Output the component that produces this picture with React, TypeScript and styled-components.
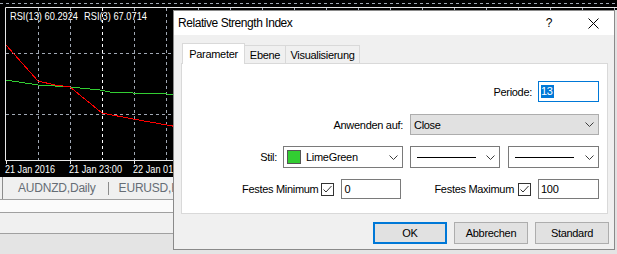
import React from "react";
import styled, { createGlobalStyle, css } from "styled-components";

const GlobalStyle = createGlobalStyle`
  html, body {
    margin: 0;
    padding: 0;
    background: #f0f0f0;
  }
  body {
    font-family: "Liberation Sans", Arial, sans-serif;
  }
  #root {
    width: 617px;
    height: 254px;
    overflow: hidden;
  }
`;

const Screen = styled.div`
  position: relative;
  width: 617px;
  height: 254px;
  overflow: hidden;
  display: flex;
  flex-direction: column;
`;

/* ---------- terminal behind the dialog ---------- */

const ChartTabs = styled.div`
  box-sizing: border-box;
  height: 23px;
  display: flex;
  align-items: center;
  background: #f0f0f0;
  border-bottom: 1px solid #a0a0a0;
  padding-left: 2px;
`;

const TabsEdge = styled.div`
  width: 1px;
  align-self: stretch;
  background: #8c8c8c;
  margin-right: 15px;
`;

const ChartTab = styled.span`
  font-size: 12px;
  letter-spacing: -0.2px;
  color: #666d75;
  white-space: nowrap;
`;

const TabDivider = styled.div`
  width: 1px;
  height: 13px;
  background: #8c8c8c;
  margin: 0 10px 0 12px;
`;

const Band = styled.div<{ $tone: "white" | "light" | "dark"; $h: number }>`
  box-sizing: border-box;
  height: ${(p) => p.$h}px;
  flex-shrink: 0;
  background: ${(p) =>
    p.$tone === "white" ? "#fbfbfb" : p.$tone === "light" ? "#f0f0f0" : "#e4e4e4"};
  ${(p) =>
    p.$tone !== "dark" &&
    css`
      border-bottom: 1px solid #a0a0a0;
    `}
`;

const red = [
  [6, 45], [38, 81], [55, 85], [70, 87], [102, 113], [133, 119], [167, 125], [200, 131],
];
const green = [
  [6, 80], [38, 85], [55, 86], [70, 87], [100, 90], [110, 92], [133, 93], [200, 95],
];

const pts = (a: number[][]) => a.map(([x, y]) => `${x},${y}`).join(" ");

function ChartCanvas() {
  const gridX: number[] = [];
  for (let x = 38; x < 617; x += 32) gridX.push(x);
  return (
    <svg width="617" height="181" style={{ display: "block", background: "#000" }}>
      <line x1="0" y1="3.5" x2="617" y2="3.5" stroke="#a0a8b4" strokeDasharray="3 3" />
      {gridX.map((x) => (
        <line
          key={x}
          x1={x + 0.5}
          y1="8"
          x2={x + 0.5}
          y2="160"
          stroke={x === 102 ? "#ffffff" : "#a0a8b4"}
          strokeDasharray="3 3"
        />
      ))}
      {[53, 114].map((y) => (
        <line key={y} x1="6" y1={y + 0.5} x2="617" y2={y + 0.5} stroke="#a0a8b4" strokeDasharray="3 3" />
      ))}
      <polyline points="617,7.5 5.5,7.5 5.5,160.5 617,160.5" fill="none" stroke="#e8e8e8" />
      {[6, 70, 134, 198].map((x) => (
        <line key={x} x1={x + 0.5} y1="160" x2={x + 0.5} y2="164" stroke="#e8e8e8" />
      ))}
      <polyline points={pts(green)} fill="none" stroke="#32cd32" shapeRendering="crispEdges" />
      <polyline points={pts(red)} fill="none" stroke="#ff0000" shapeRendering="crispEdges" />
      <g fill="#ffffff" fontFamily="Liberation Sans, Arial, sans-serif">
        <text x="10" y="20" fontSize="11" textLength="68" lengthAdjust="spacingAndGlyphs">
          RSI(13) 60.2924
        </text>
        <text x="84" y="20" fontSize="11" textLength="63" lengthAdjust="spacingAndGlyphs">
          RSI(3) 67.0714
        </text>
        <text x="5" y="173" fontSize="10" textLength="50" lengthAdjust="spacingAndGlyphs">
          21 Jan 2016
        </text>
        <text x="69" y="173" fontSize="10" textLength="53" lengthAdjust="spacingAndGlyphs">
          21 Jan 23:00
        </text>
        <text x="133" y="173" fontSize="10" textLength="53" lengthAdjust="spacingAndGlyphs">
          22 Jan 01:00
        </text>
      </g>
    </svg>
  );
}

/* ---------- dialog ---------- */

const Dialog = styled.div`
  position: absolute;
  left: 173px;
  top: 10px;
  box-sizing: border-box;
  width: 442px;
  height: 240px;
  border: 1px solid #8a8a8a;
  background: #f0f0f0;
  box-shadow: 2px 0 0 #e2e2e2;
  display: flex;
  flex-direction: column;
  font-size: 11px;
  letter-spacing: -0.3px;
  color: #000;
`;

const TitleBar = styled.div`
  height: 24px;
  flex-shrink: 0;
  display: flex;
  align-items: center;
  background: #fff;
  padding-left: 4px;
  font-size: 12px;
`;

const Title = styled.div`
  flex: 1;
  letter-spacing: -0.45px;
  white-space: nowrap;
`;

const TitleButton = styled.div<{ $w: number }>`
  width: ${(p) => p.$w}px;
  height: 24px;
  display: flex;
  align-items: center;
  justify-content: center;
  font-size: 12px;
`;

const DialogBody = styled.div`
  flex: 1;
  display: flex;
  flex-direction: column;
  padding: 8px 6px 5px 7px;
`;

const TabStrip = styled.div`
  position: relative;
  z-index: 1;
  display: flex;
  align-items: flex-end;
  height: 21px;
  margin: 0 0 -1px 1px;
`;

const Tab = styled.div<{ $active?: boolean; $w: number; $first?: boolean }>`
  box-sizing: border-box;
  width: ${(p) => p.$w}px;
  height: ${(p) => (p.$active ? 21 : 18)}px;
  margin-bottom: ${(p) => (p.$active ? 0 : 1)}px;
  border: 1px solid #d9d9d9;
  border-bottom: none;
  ${(p) => !p.$first && "border-left: none;"}
  background: ${(p) => (p.$active ? "#fff" : "#f0f0f0")};
  display: flex;
  align-items: center;
  justify-content: center;
  white-space: nowrap;
`;

const Panel = styled.div`
  box-sizing: border-box;
  height: 151px;
  flex-shrink: 0;
  background: #fff;
  border: 1px solid #d9d9d9;
  padding: 17px 8px 0 0;
  display: flex;
  flex-direction: column;
`;

const FormRow = styled.div<{ $mt?: number }>`
  display: flex;
  justify-content: flex-end;
  align-items: center;
  margin-top: ${(p) => p.$mt ?? 0}px;
`;

const Label = styled.span<{ $gap: number; $mr?: number }>`
  margin-right: ${(p) => p.$gap}px;
  margin-left: ${(p) => p.$mr ?? 0}px;
  white-space: nowrap;
`;

const TextBox = styled.div<{ $w: number; $h: number; $focus?: boolean; $mr?: number }>`
  box-sizing: border-box;
  width: ${(p) => p.$w}px;
  height: ${(p) => p.$h}px;
  margin-right: ${(p) => p.$mr ?? 0}px;
  border: 1px solid ${(p) => (p.$focus ? "#0078d7" : "#7a7a7a")};
  background: #fff;
  padding-left: 2px;
  display: flex;
  align-items: center;
`;

const Selected = styled.span`
  background: #0078d7;
  color: #fff;
  line-height: 13px;
  padding-right: 1px;
`;

const Combo = styled.div<{ $w: number; $h: number; $flat?: boolean; $mr?: number }>`
  box-sizing: border-box;
  width: ${(p) => p.$w}px;
  height: ${(p) => p.$h}px;
  margin-right: ${(p) => p.$mr ?? 0}px;
  border: 1px solid ${(p) => (p.$flat ? "#adadad" : "#7a7a7a")};
  background: ${(p) => (p.$flat ? "#e1e1e1" : "#fff")};
  display: flex;
  align-items: center;
  padding: 0 4px 0 3px;
`;

const ComboValue = styled.div`
  flex: 1;
  display: flex;
  align-items: center;
  white-space: nowrap;
`;

const Swatch = styled.div<{ $color: string }>`
  box-sizing: border-box;
  width: 14px;
  height: 14px;
  border: 1px solid #555;
  background: ${(p) => p.$color};
  margin-right: 5px;
`;

const LineSample = styled.div`
  width: 59px;
  height: 1px;
  background: #000;
  margin-left: 3px;
`;

const CheckBox = styled.div<{ $mr: number }>`
  box-sizing: border-box;
  width: 13px;
  height: 13px;
  border: 1px solid #333;
  background: #fff;
  margin-right: ${(p) => p.$mr}px;
  display: flex;
`;

const ButtonRow = styled.div`
  display: flex;
  justify-content: flex-end;
  margin: 8px -1px 0 0;
`;

const Button = styled.div<{ $primary?: boolean }>`
  box-sizing: border-box;
  width: 74px;
  height: 22px;
  margin-left: 7px;
  background: #e1e1e1;
  border: ${(p) => (p.$primary ? "2px solid #0078d7" : "1px solid #adadad")};
  display: flex;
  align-items: center;
  justify-content: center;
`;

const Chevron = () => (
  <svg width="9" height="5" viewBox="0 0 9 5">
    <polyline points="0.5,0.5 4.5,4.5 8.5,0.5" fill="none" stroke="#3c3c3c" />
  </svg>
);

const Check = () => (
  <svg width="11" height="11" viewBox="0 0 11 11">
    <polyline points="1.5,5.5 4,8 9.5,2" fill="none" stroke="#333" />
  </svg>
);

export default function App() {
  return (
    <>
      <GlobalStyle />
      <Screen>
        <ChartCanvas />
        <ChartTabs>
          <TabsEdge />
          <ChartTab>AUDNZD,Daily</ChartTab>
          <TabDivider />
          <ChartTab>EURUSD,H1</ChartTab>
        </ChartTabs>
        <Band $tone="white" $h={13} />
        <Band $tone="light" $h={21} />
        <Band $tone="dark" $h={20} />

        <Dialog>
          <TitleBar>
            <Title>Relative Strength Index</Title>
            <TitleButton $w={46}>?</TitleButton>
            <TitleButton $w={42}>
              <svg width="11" height="11" viewBox="0 0 11 11">
                <path d="M0.5 0.5 L10.5 10.5 M10.5 0.5 L0.5 10.5" stroke="#000" strokeWidth="1" />
              </svg>
            </TitleButton>
          </TitleBar>
          <DialogBody>
            <TabStrip>
              <Tab $active $first $w={63}>Parameter</Tab>
              <Tab $w={41}>Ebene</Tab>
              <Tab $w={74}>Visualisierung</Tab>
            </TabStrip>
            <Panel>
              <FormRow>
                <Label $gap={6}>Periode:</Label>
                <TextBox $w={61} $h={21} $focus>
                  <Selected>13</Selected>
                </TextBox>
              </FormRow>
              <FormRow $mt={12}>
                <Label $gap={7}>Anwenden auf:</Label>
                <Combo $w={189} $h={21} $flat>
                  <ComboValue>Close</ComboValue>
                  <Chevron />
                </Combo>
              </FormRow>
              <FormRow $mt={11}>
                <Label $gap={6}>Stil:</Label>
                <Combo $w={120} $h={22} $mr={7}>
                  <ComboValue>
                    <Swatch $color="#32cd32" />
                    LimeGreen
                  </ComboValue>
                  <Chevron />
                </Combo>
                <Combo $w={90} $h={22} $mr={8}>
                  <ComboValue>
                    <LineSample />
                  </ComboValue>
                  <Chevron />
                </Combo>
                <Combo $w={91} $h={22}>
                  <ComboValue>
                    <LineSample />
                  </ComboValue>
                  <Chevron />
                </Combo>
              </FormRow>
              <FormRow $mt={11}>
                <Label $gap={3}>Festes Minimum</Label>
                <CheckBox $mr={7}>
                  <Check />
                </CheckBox>
                <TextBox $w={60} $h={20} $mr={33}>
                  0
                </TextBox>
                <Label $gap={4}>Festes Maximum</Label>
                <CheckBox $mr={7}>
                  <Check />
                </CheckBox>
                <TextBox $w={61} $h={20}>
                  100
                </TextBox>
              </FormRow>
            </Panel>
            <ButtonRow>
              <Button $primary>OK</Button>
              <Button>Abbrechen</Button>
              <Button>Standard</Button>
            </ButtonRow>
          </DialogBody>
        </Dialog>
      </Screen>
    </>
  );
}
